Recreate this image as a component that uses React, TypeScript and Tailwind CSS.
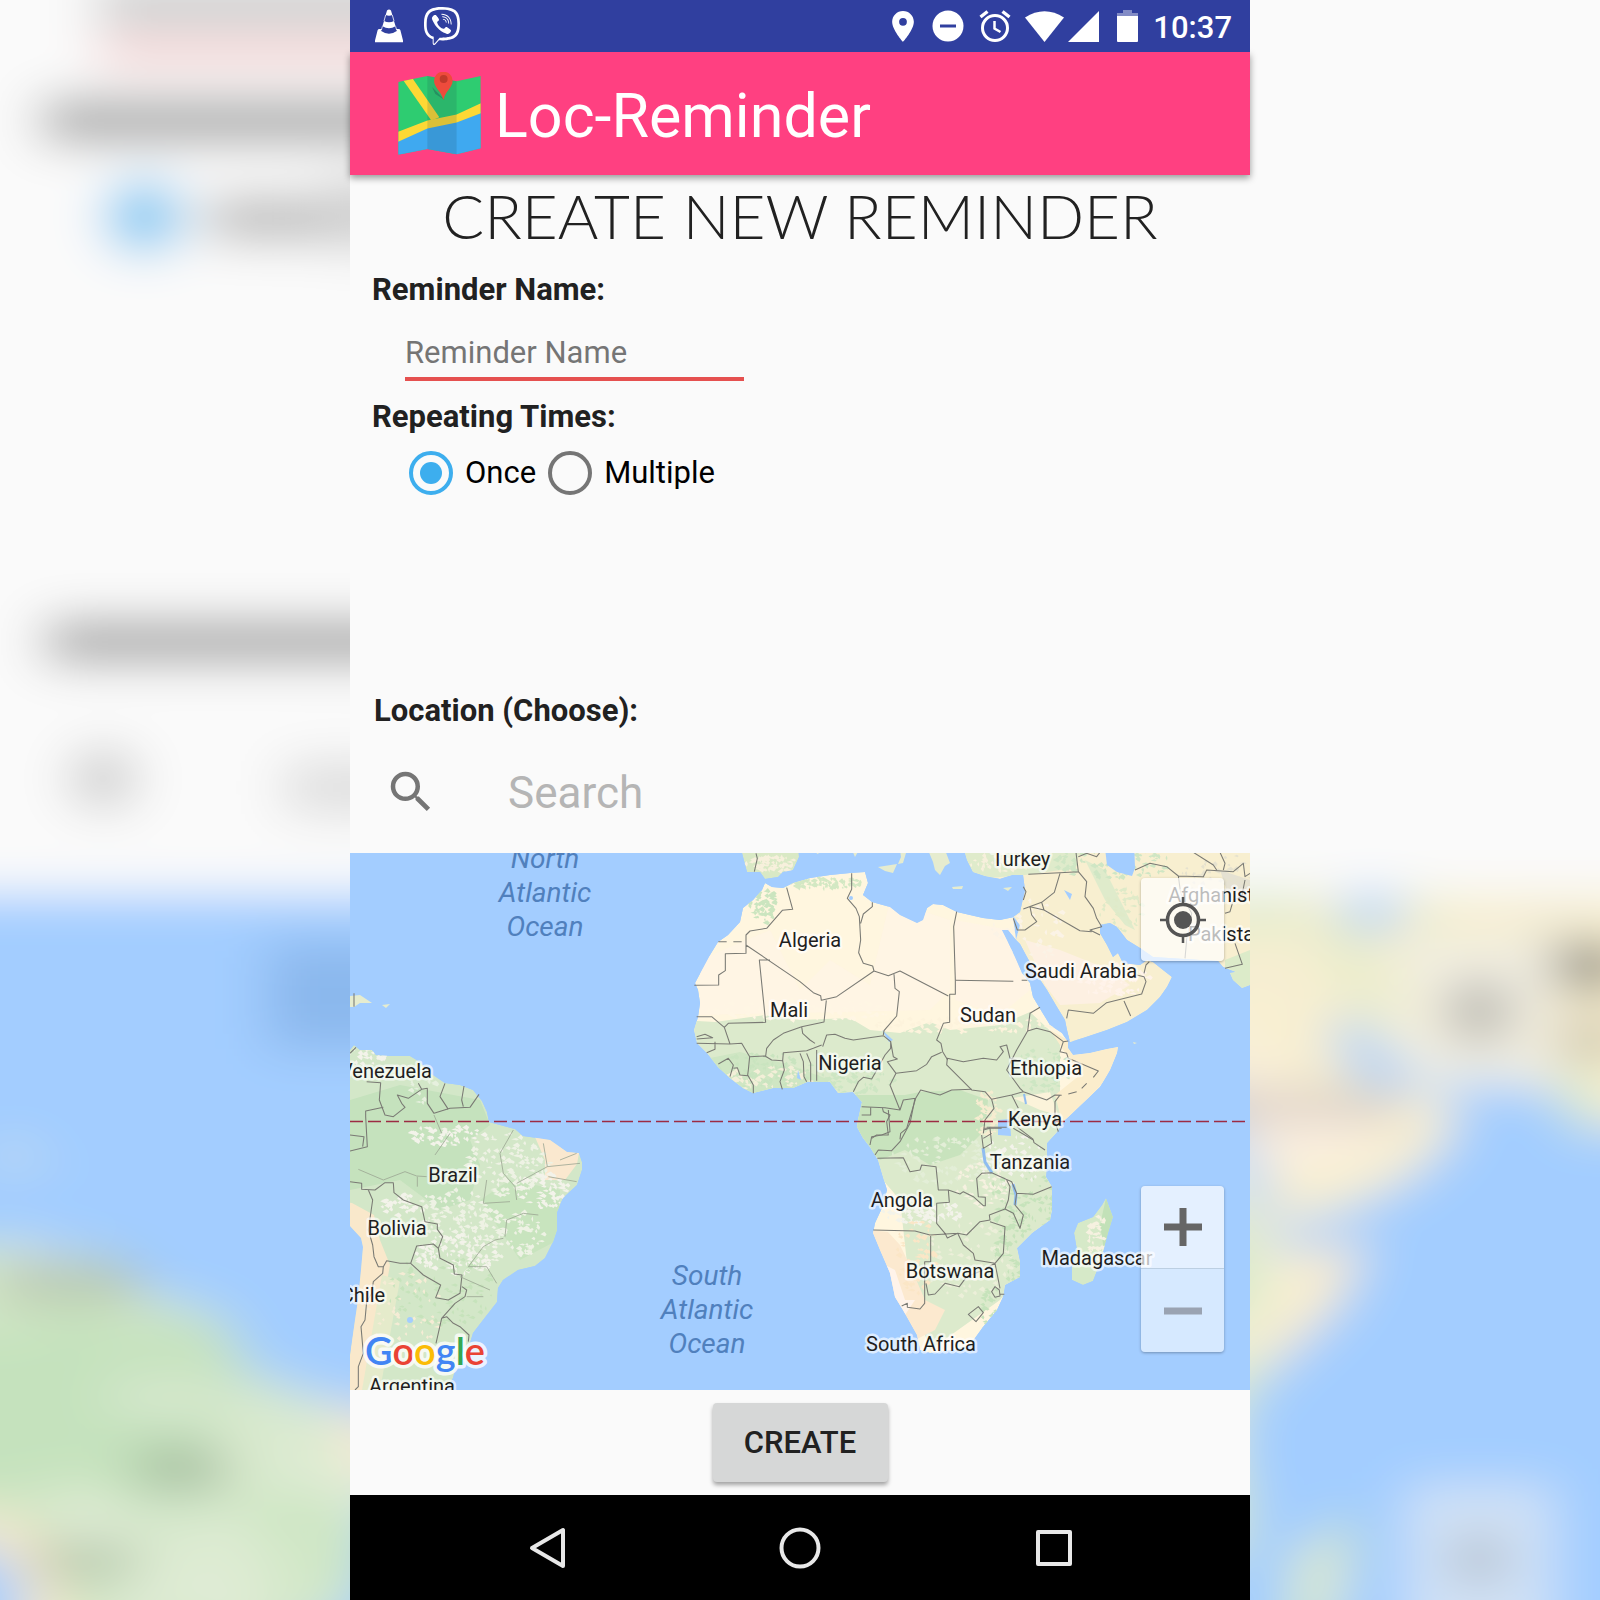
import { useState } from "react";
import type { ReactNode } from "react";
import { FaViber } from "react-icons/fa";
import { MdSearch } from "react-icons/md";

/* ---------- map data ---------- */

const AMERICA =
  "M290 1050L350 1050 354 1045 360 1050 372 1050 376 1055 390 1056 410 1056 420 1062 430 1073 445 1083 460 1085 473 1090 482 1101 487 1112 489 1122 500 1125 515 1129 523 1136 537 1138 550 1140 560 1147 567 1152 579 1153 582 1162 582 1170 577 1185 563 1198 557 1212 557 1230 553 1242 545 1258 535 1266 518 1270 503 1280 498 1288 497 1302 483 1320 473 1333 470 1343 458 1358 453 1378 440 1400 290 1400 290 1390 350 1390 350 1355 355 1320 358 1300 361 1270 363 1247 361 1238 350 1226 290 1200Z";

const AFRICA =
  "M765 883L762 890 753 900 743 908 740 922 728 935 718 942 710 955 703 968 695 983 698 990 700 1003 698 1017 694 1030 697 1043 707 1053 718 1067 730 1078 743 1088 753 1093 773 1088 793 1088 807 1082 830 1082 838 1093 853 1092 862 1102 858 1120 857 1127 863 1138 870 1147 878 1160 883 1177 887 1190 882 1208 875 1223 873 1233 880 1250 890 1273 895 1297 903 1310 917 1335 920 1350 930 1353 953 1350 970 1345 983 1327 997 1310 1003 1297 1005 1285 1020 1277 1020 1262 1017 1248 1032 1233 1050 1220 1052 1210 1052 1187 1046 1177 1047 1160 1047 1143 1057 1132 1063 1122 1083 1103 1100 1087 1110 1070 1117 1053 1118 1047 1107 1049 1090 1053 1073 1055 1068 1048 1068 1042 1062 1033 1050 1025 1042 1012 1033 997 1030 983 1022 973 1015 957 1007 940 1002 930 1008 930 1016 940 1020 925 1014 917 1000 920 983 918 970 915 957 912 943 905 933 904 927 908 923 920 917 923 900 915 890 907 872 902 863 895 868 883 865 872 850 873 830 875 810 878 793 883 783 888 772 887Z";

const ASIA =
  "M1013 917L1020 912 1022 903 1025 890 1023 875 1012 875 1000 879 985 876 973 872 967 860 965 853 965 800 1320 800 1320 980 1250 985 1242 988 1233 980 1230 973 1236 972 1223 967 1218 961 1200 960 1153 957 1140 948 1127 940 1117 927 1110 923 1100 925 1100 933 1107 945 1113 957 1118 953 1123 963 1140 965 1147 960 1153 962 1163 970 1172 977 1167 987 1160 997 1147 1010 1127 1022 1107 1030 1083 1038 1070 1042 1067 1030 1065 1020 1057 1007 1047 990 1037 975 1027 957 1020 944 1016 940Z";

const MADAGASCAR =
  "M1106 1198L1113 1217 1108 1233 1100 1263 1093 1281 1083 1285 1072 1280 1072 1267 1077 1250 1074 1233 1078 1223 1093 1217 1102 1205Z";

const IBERIA = "M742 830L742 853 747 872 760 872 765 879 778 877 783 872 793 870 799 857 797 830Z";

const ISLANDS = [
  "M878 867L897 864 893 873 885 871Z",
  "M900 850L906 853 903 863 898 864 901 857Z",
  "M928 850L945 850 950 863 945 866 940 875 935 870 933 862Z",
  "M952 887L963 886 962 889 953 889Z",
  "M1003 888L1012 887 1008 891Z",
  "M852 850L859 850 855 857Z",
  "M816 851L822 852 817 854Z",
  "M350 996L360 995 372 1003 360 1003 354 1007 350 1007Z",
  "M382 1005L390 1004 386 1008Z",
  "M1133 1042L1137 1043 1134 1044Z",
];

/* Borders are digitised at three times the map's scale, one tile per origin. */
const BORDER_TILES = [
  {
    origin: "translate(650 840) scale(0.33333)",
    lines:
      "M410 143L428 208 397 211 350 265 300 273 288 285 288 340 226 341 226 392 206 405 206 435 133 436M205 305H230M250 305H275M288 315L450 425 490 458 512 467 514 481 560 470 672 393 668 378 640 370 626 338 632 300 628 230 618 205 592 175 605 148 605 100M632 250L640 222 667 200 667 187M360 360L328 360 347 547 235 550 223 562 185 530 140 530M529 481L522 546 455 560 400 580 370 600 350 625 347 648M672 393L715 407 750 393 895 468M732 403L735 445 748 455 740 528 702 572 700 585M920 215L911 260 916 421 916 463 899 463 899 547 880 550 860 600 873 610 878 635 893 660M518 620L530 585 555 583 585 595 610 600 700 587 722 605 722 625 705 645 675 700 665 717 640 712 625 725 610 755M722 605L730 650 742 657 712 665 738 700 720 735 750 810 705 803 635 800M738 700L800 692 830 673 845 650 875 637M750 810L760 780 797 775 770 865 752 880 750 898M797 775L812 750 870 765 905 750 965 748M635 825H662V803M697 803L700 815 720 825 710 845 715 885 680 885 665 895M223 562L240 612 140 610M195 605L195 628 170 638M140 590L165 583 188 593 140 597M240 612L275 610 299 650 295 690 293 705 310 735 310 760M205 672L235 655 250 675 240 710M250 685L262 683 270 705 293 707M299 650L345 648 365 660 398 662M398 662L400 638 470 632 490 625 515 615M398 662L403 690 390 725 397 748M450 640L460 665 462 710 470 725M470 640L482 670 482 725M500 630V722M455 560L458 580 480 600 495 610M318 40L322 55 313 95",
  },
  {
    origin: "translate(940 840) scale(0.33333)",
    lines:
      "M265 103L360 98 415 95 440 125 435 170 460 205 470 235 485 260 450 270 480 285M360 100L343 157 305 187 250 207M305 187L312 210 420 272 455 275M312 210L270 200 275 225 290 245 255 270 232 270 220 235M250 180L258 155 250 140M415 95L408 37M415 50L440 40 470 50 480 37M585 90L630 70 680 80 715 108 722 160 755 220 740 300 735 355M715 108L790 110 800 90 880 95 910 70 915 110 930 100M760 37L820 75 830 90M840 37L855 70 850 90M855 220L870 215 880 180 905 170 915 120M885 310L907 373 855 385M380 535L385 510 460 520 500 488 605 462 618 425 612 410 590 405M552 483L572 528M612 400L618 375 628 365M47 421L220 424M245 421H262M300 502L270 520 263 573 230 630 200 690 240 745 250 755M263 573L290 565 330 575 370 605 385 603M370 605L360 635 380 640 385 655 475 693 460 712M440 730L425 745M410 755L385 762M365 766L345 765 320 780 250 755 215 765 155 778 135 755 95 750 20 675 22 655 70 665 130 655 170 660 190 635 180 620 200 615 210 655 230 660M155 778L162 805 135 840 130 880M215 765L235 805M360 765L345 785 345 845 355 875M230 860L280 898M130 865H185",
  },
  {
    origin: "translate(820 1090) scale(0.33333)",
    lines:
      "M285 25L270 100 240 155 215 182 175 180 165 195M172 205L250 203 270 245 300 240 305 225 348 230 355 300 385 300 420 312 430 305 460 320 490 347 496 347 496 322 475 320 470 265 485 250 515 248 575 275 590 310 640 313 695 290M385 300L388 337 350 340 350 400 375 430 382 444 413 430 440 435 480 395 510 390 508 375 555 357M560 270L570 290 565 330 555 357 580 370 600 415 610 375 585 345 590 310M160 420L285 423 330 435 413 430 430 465 460 490 465 510 525 520 550 490 555 410 510 395M332 438V515H314V640L300 657 262 652 262 640 245 648M318 580L325 615 345 612 375 580 418 590 440 560 490 540 525 520 540 595M515 605L525 590 538 600 540 618 525 622ZM540 613H553M445 673L475 650 490 668 468 695ZM485 135L490 175 515 160 510 115 490 120M490 145L515 130M500 112H560M580 115L640 150 642 158 675 180M205 60L210 125 185 135 155 140 150 165",
  },
  {
    origin: "translate(350 1000) scale(0.33333)",
    lines:
      "M50 245L92 248 88 300 105 345 130 350 165 322 155 310 142 285 175 295 215 268 232 265 232 310 252 340 300 325 360 322 387 283M205 250L215 268M285 250L270 290 295 328M342 258L335 300 340 320M100 322L47 333 47 350 52 440 0 453M0 405L42 410 38 440M0 545L35 550 35 568 75 570 105 548 130 548 132 578 160 600 215 620 225 665 262 672 262 688 278 710 265 745 270 775 310 795 313 822 336 825 330 880 295 900 257 893 272 855 220 825 182 790 200 738 250 732 265 745M55 570L68 600 55 690 68 735 72 770 85 800 100 800 110 782 150 790 182 790M100 800L98 820 70 845 65 880 50 905 45 960 33 980 40 1060 25 1100 25 1160 15 1170M336 860L350 870 345 890 315 910 275 955 290 950 310 970 330 980 357 1005 355 1025M275 955L258 1030M12 -20V20M0 160L18 142",
  },
];

const STATE_LINES =
  "M25 508L100 540 165 515 200 528 230 530M202 530V560M255 465L300 400M252 345L275 400M490 390L450 460 460 520 495 560 500 600M400 610L480 605M465 710L470 660 520 640 565 645M355 800L400 740 435 720 460 715M355 800L410 800 440 850M330 830L420 870M350 890H400M580 430L592 500 500 550M592 500L690 490M595 530L680 545M630 480L680 460M410 540L400 610";

type Patch = [number, number, number, number, number, string];

/* centre x, centre y, radius x, radius y, count, colour */
const PATCHES: Patch[] = [
  [445, 1135, 40, 10, 70, "#f3f3ea"],
  [505, 1165, 42, 32, 130, "#eef2e4"],
  [450, 1215, 38, 26, 110, "#eef2e4"],
  [500, 1235, 45, 26, 110, "#eef2e4"],
  [455, 1255, 42, 20, 110, "#f3f3ea"],
  [540, 1190, 26, 18, 60, "#f3f3ea"],
  [395, 1205, 18, 12, 40, "#f3f3ea"],
  [420, 1080, 14, 24, 30, "#e6f0de"],
  [440, 1290, 55, 35, 90, "#c6e3bb"],
  [400, 1310, 40, 40, 50, "#f5ecd5"],
  [365, 1055, 20, 10, 30, "#f3f3ea"],
  [760, 905, 16, 18, 60, "#cbe5bf"],
  [820, 883, 40, 6, 70, "#d3e8c3"],
  [770, 864, 26, 8, 60, "#f7f0dc"],
  [1000, 862, 36, 9, 70, "#f7f0dc"],
  [1110, 862, 60, 18, 110, "#cfe6c4"],
  [1120, 910, 22, 24, 50, "#dfeac8"],
  [1030, 930, 40, 30, 50, "#fbf3e6"],
  [1220, 880, 40, 26, 70, "#e6e2cf"],
  [1110, 980, 36, 16, 70, "#fff3ea"],
  [800, 1010, 100, 10, 80, "#fff6e4"],
  [960, 1025, 90, 8, 80, "#fdf3dc"],
  [760, 1070, 50, 18, 100, "#c9e4bf"],
  [765, 1078, 50, 12, 60, "#f3efd8"],
  [850, 1080, 40, 14, 80, "#cde6c3"],
  [940, 1160, 50, 24, 80, "#e3eed7"],
  [920, 1212, 40, 12, 80, "#f3f3ea"],
  [980, 1185, 26, 22, 60, "#f6f1e0"],
  [1020, 1200, 34, 34, 80, "#c6e3bb"],
  [1010, 1160, 34, 26, 60, "#f3f3ea"],
  [985, 1115, 12, 24, 60, "#f6ecd0"],
  [1040, 1070, 28, 22, 70, "#cde6c3"],
  [960, 1260, 50, 40, 70, "#ecefd9"],
  [1010, 1250, 18, 30, 50, "#c6e3bb"],
  [1095, 1235, 10, 30, 50, "#f6f1e0"],
  [990, 1310, 12, 24, 40, "#c6e3bb"],
  [915, 1255, 20, 40, 60, "#fbe6c6"],
];

function buildSpeckles(patches: Patch[]) {
  let seed = 20117;
  const rnd = () => {
    seed = (seed * 1103515245 + 12345) % 2147483648;
    return seed / 2147483648;
  };
  return patches.map(([cx, cy, rx, ry, count, fill]) => {
    let d = "";
    for (let i = 0; i < count; i++) {
      const a = rnd() * Math.PI * 2;
      const r = Math.sqrt(rnd());
      const x = cx + Math.cos(a) * r * rx;
      const y = cy + Math.sin(a) * r * ry;
      const w = 1 + rnd() * 4;
      const h = 1 + rnd() * 2;
      d += `M${x.toFixed(1)} ${y.toFixed(1)}l${w.toFixed(1)} ${(-h).toFixed(1)} ${(w * 0.6).toFixed(1)} ${h.toFixed(1)} ${(-w * 0.4).toFixed(1)} ${h.toFixed(1)}z`;
    }
    return { d, fill };
  });
}

const SPECKLES = buildSpeckles(PATCHES);

const COUNTRIES: [string, number, number][] = [
  ["Turkey", 1021, 866],
  ["Afghanist", 1211, 902],
  ["Pakista", 1221, 941],
  ["Algeria", 810, 947],
  ["Saudi Arabia", 1081, 978],
  ["Mali", 789, 1017],
  ["Sudan", 988, 1022],
  ["Nigeria", 850, 1070],
  ["Ethiopia", 1046, 1075],
  ["Venezuela", 386, 1078],
  ["Kenya", 1035, 1126],
  ["Tanzania", 1030, 1169],
  ["Brazil", 453, 1182],
  ["Angola", 902, 1207],
  ["Bolivia", 397, 1235],
  ["Madagascar", 1097, 1265],
  ["Botswana", 950, 1278],
  ["Chile", 363, 1302],
  ["South Africa", 921, 1351],
  ["Argentina", 412, 1393],
];

const OCEANS: [string, number, number][] = [
  ["North", 545, 868],
  ["Atlantic", 545, 902],
  ["Ocean", 545, 936],
  ["South", 707, 1285],
  ["Atlantic", 707, 1319],
  ["Ocean", 707, 1353],
];

function MapTerrain({ id }: { id: string }) {
  return (
    <g>
      <clipPath id={id}>
        <path d={[AMERICA, AFRICA, ASIA, MADAGASCAR, IBERIA].join("")} />
      </clipPath>
      <rect x="200" y="853" width="1200" height="537" fill="#a3cdff" />
      <path d={ISLANDS.join("")} fill="#e6eccf" />
      <g clipPath={`url(#${id})`}>
        <path d={AMERICA} fill="#d3e7c8" />
        <path d="M290 1090L350 1100 400 1085 480 1100 490 1125 470 1140 480 1165 470 1200 440 1210 400 1180 350 1190 290 1190Z" fill="#c5e2bd" />
        <path d="M480 1200L510 1180 560 1190 558 1240 520 1260 500 1230Z" fill="#c8e4be" />
        <path d="M535 1137L550 1139 567 1151 579 1153 577 1164 565 1180 545 1180 545 1160Z" fill="#fae8cf" />
        <path d="M290 1195L352 1203 374 1215 380 1240 390 1265 382 1310 385 1340 370 1390 350 1390 350 1355 361 1260Z" fill="#f9e8cb" />
        <path d="M382 1275L400 1280 380 1390 362 1390Z" fill="#e5ebcb" />
        <path d={AFRICA} fill="#fff6df" />
        <path d="M700 960L770 930 800 990 830 960 870 985 890 900 950 920 950 990 930 1010 700 1015Z" fill="#fff3ea" opacity="0.5" />
        <path d="M955 920L1010 930 1030 990 1000 1015 955 1000Z" fill="#fff3ea" opacity="0.4" />
        <path d="M680 1020L715 1022 765 1015 800 1020 850 1018 870 1030 900 1033 930 1022 950 1030 1000 1025 1030 1012 1060 1040 1060 1100 1080 1200 1000 1300 930 1350 910 1290 900 1200 840 1130 680 1090Z" fill="#dceacc" />
        <path d="M700 1060L740 1052 790 1065 830 1080 780 1100 700 1100Z" fill="#cfe6c3" />
        <path d="M850 1095L905 1095 920 1092 960 1090 988 1100 985 1130 960 1155 930 1165 905 1150 880 1160 850 1130Z" fill="#c8e3bd" />
        <path d="M1050 1030L1068 1040 1120 1045 1110 1075 1080 1108 1062 1122 1055 1095 1080 1075Z" fill="#fbedcc" />
        <path d="M1013 1098L1050 1092 1058 1115 1040 1110Z" fill="#fbf3da" />
        <path d="M870 1230L888 1232 900 1245 912 1270 925 1300 945 1310 935 1330 915 1340 890 1300Z" fill="#fce9cf" />
        <path d="M885 1265L895 1270 905 1300 915 1300 905 1315 890 1290Z" fill="#fff3ea" />
        <path d={ASIA} fill="#f8efd0" />
        <path d="M965 850L1080 850 1075 868 1025 875 965 880Z" fill="#dfebcb" />
        <path d="M1085 860L1105 870 1135 930 1125 925 1105 900Z" fill="#dfebcb" />
        <path d="M1025 940L1060 950 1110 970 1130 985 1100 1003 1060 1005 1045 985Z" fill="#fdf0e2" />
        <path d="M1220 870L1250 880 1250 900 1230 900Z" fill="#e5e1d2" />
        <path d="M1225 960L1250 950 1250 990 1225 985Z" fill="#dcebc9" />
        <path d={MADAGASCAR} fill="#d6e9c8" />
        <path d="M1106 1198L1113 1217 1104 1250 1100 1225Z" fill="#c2e1b8" />
        <path d={IBERIA} fill="#d9e9c5" />
        {SPECKLES.map((s, i) => (
          <path key={i} d={s.d} fill={s.fill} />
        ))}
      </g>
      <g fill="#a3cdff">
        <path d="M1104 840L1107 865 1117 872 1132 876 1135 868 1134 840Z" />
        <path d="M998 1120L1010 1119 1011 1136 998 1135Z" />
        <path d="M882 1030L893 1040 889 1042Z" />
        <path d="M1064 890L1072 894 1070 900Z" />
        <path d="M798 1070L801 1080 797 1078Z" />
        <circle cx="410" cy="1320" r="3" />
        <circle cx="851" cy="898" r="2" />
      </g>
      <g fill="none" stroke="#8fbcf0" strokeWidth="3" strokeLinejoin="round">
        <path d="M983 1148L985 1162 992 1173" />
        <path d="M1013 1184L1016 1195 1015 1205" />
        <path d="M1024 1094L1026 1104" strokeWidth="2" />
      </g>
    </g>
  );
}

function WorldMap() {
  return (
    <svg viewBox="350 853 900 537" preserveAspectRatio="xMidYMid slice" className="block h-full w-full" role="img" aria-label="Map">
      <MapTerrain id="land" />
      {BORDER_TILES.map((tile) => (
        <g key={tile.origin} transform={tile.origin}>
          <path d={tile.lines} fill="none" stroke="#7a7a74" strokeWidth="3.2" strokeLinejoin="round" />
        </g>
      ))}
      <g transform="translate(350 1000) scale(0.33333)">
        <path d={STATE_LINES} fill="none" stroke="#9aa592" strokeWidth="2.4" />
      </g>
      <path d="M350 1121.500H1250" stroke="#9c2b43" strokeWidth="1.600" strokeDasharray="13 5" />
      <g
        fontFamily="Roboto, sans-serif"
        fontSize="20"
        textAnchor="middle"
        fill="#1f1f1f"
        stroke="#ffffff"
        strokeOpacity="0.65"
        strokeWidth="5"
        strokeLinejoin="round"
        paintOrder="stroke"
      >
        {COUNTRIES.map(([name, x, y]) => (
          <text key={name} x={x} y={y}>
            {name}
          </text>
        ))}
      </g>
      <g fontFamily="Roboto, sans-serif" fontSize="28" fontStyle="italic" textAnchor="middle" fill="#5080bd">
        {OCEANS.map(([name, x, y]) => (
          <text key={`${name}${y}`} x={x} y={y}>
            {name}
          </text>
        ))}
      </g>
      <text
        x="425"
        y="1365"
        textAnchor="middle"
        fontFamily="Lato, sans-serif"
        fontSize="38"
        fontWeight="600"
        stroke="#ffffff"
        strokeOpacity="0.8"
        strokeWidth="7"
        strokeLinejoin="round"
        paintOrder="stroke"
      >
        <tspan fill="#4285f4">G</tspan>
        <tspan fill="#ea4335">o</tspan>
        <tspan fill="#fbbc05">o</tspan>
        <tspan fill="#4285f4">g</tspan>
        <tspan fill="#34a853">l</tspan>
        <tspan fill="#ea4335">e</tspan>
      </text>
    </svg>
  );
}

/* Enlarged, out-of-focus copy of the screen that fills the window behind it. */
function Backdrop() {
  return (
    <svg
      viewBox="350 350 900 900"
      preserveAspectRatio="xMidYMid slice"
      className="absolute inset-0 h-full w-full"
      aria-hidden="true"
    >
      <filter id="soften" filterUnits="userSpaceOnUse" x="250" y="250" width="1100" height="1100">
        <feGaussianBlur stdDeviation="15 13" />
      </filter>
      <g filter="url(#soften)">
        <rect x="200" y="200" width="1200" height="1200" fill="#fafafa" />
        <MapTerrain id="soft-land" />
        <rect x="200" y="700" width="1200" height="153" fill="#fafafa" />
        <rect x="405" y="341" width="220" height="22" fill="#757575" opacity="0.4" />
        <rect x="405" y="376" width="339" height="6" fill="#e5504f" />
        <rect x="374" y="406" width="236" height="24" fill="#212121" opacity="0.4" />
        <circle cx="431" cy="472" r="21" fill="#3daeee" opacity="0.65" />
        <rect x="467" y="461" width="69" height="24" fill="#212121" opacity="0.3" />
        <rect x="536" y="450" width="60" height="40" fill="#757575" opacity="0.3" />
        <rect x="376" y="699" width="258" height="24" fill="#212121" opacity="0.4" />
        <circle cx="408" cy="788" r="18" fill="#757575" opacity="0.35" />
        <rect x="510" y="778" width="130" height="30" fill="#9e9e9e" opacity="0.3" />
        <rect x="500" y="880" width="92" height="60" fill="#5080bd" opacity="0.28" />
        <rect x="350" y="1061" width="80" height="20" fill="#1f1f1f" opacity="0.18" />
        <rect x="428" y="1166" width="48" height="20" fill="#1f1f1f" opacity="0.2" />
        <rect x="368" y="1218" width="58" height="20" fill="#1f1f1f" opacity="0.15" />
        <rect x="1026" y="962" width="110" height="20" fill="#1f1f1f" opacity="0.15" />
        <rect x="1225" y="882" width="40" height="24" fill="#1f1f1f" opacity="0.5" />
        <rect x="1225" y="926" width="40" height="18" fill="#1f1f1f" opacity="0.25" />
        <rect x="1141" y="878" width="83" height="83" fill="#eeeeee" opacity="0.6" />
        <circle cx="1182" cy="919" r="19" fill="#666666" opacity="0.4" />
        <rect x="1141" y="1185" width="83" height="165" fill="#f0f0f0" opacity="0.6" />
        <circle cx="1182" cy="1227" r="15" fill="#666666" opacity="0.3" />
      </g>
    </svg>
  );
}

/* ---------- icons ---------- */

function ConeIcon() {
  return (
    <svg viewBox="0 0 28 34" className="h-[34px] w-7" fill="#fff" aria-hidden="true">
      <path d="M12 1.500Q14 -.5 16 1.500L17.300 6Q14 7.500 10.700 6ZM9 12L7.400 17.300Q14 21 20.600 17.300L19 12Q14 14.500 9 12Z" />
      <path d="M4.500 20H6.600L6.200 22Q14 27.500 21.800 22L21.400 20H23.500Q25 20 25.400 21.300L28 31.500V33.300H0V31.500L2.600 21.300Q3 20 4.500 20Z" />
      <path d="M10.700 6L9 12M17.300 6L19 12M7.400 17.300L6.400 21M20.600 17.300L21.600 21" stroke="#fff" strokeWidth=".8" />
    </svg>
  );
}

function StatusIcons() {
  return (
    <div className="flex items-center">
      <svg viewBox="5 2 14 20" className="mr-[18px] h-[31px] w-[22px]" fill="#fff" aria-hidden="true">
        <path d="M12 2C8.130 2 5 5.130 5 9c0 5.250 7 13 7 13s7-7.750 7-13c0-3.870-3.130-7-7-7zm0 9.500a2.500 2.500 0 110-5 2.500 2.500 0 010 5z" />
      </svg>
      <svg viewBox="0 0 32 32" className="mr-[15px] size-8" aria-hidden="true">
        <circle cx="16" cy="16" r="15.500" fill="#fff" />
        <path d="M8 16H24" stroke="#303f9f" strokeWidth="3" />
      </svg>
      <svg viewBox="0 0 32 32" className="mr-3.5 size-8" fill="none" stroke="#fff" aria-hidden="true">
        <circle cx="16" cy="18" r="12.500" strokeWidth="3" />
        <path d="M15.500 11V18.500L21.500 22" strokeWidth="2.500" />
        <path d="M1.500 7L8.500 1.500M30.500 7L23.500 1.500" strokeWidth="3.400" />
      </svg>
      <svg viewBox="0 0 39 31" className="mr-1 h-[31px] w-[39px]" fill="#fff" aria-hidden="true">
        <path d="M0 6.500Q19.500 -6 39 6.500L19.500 31Z" />
      </svg>
      <svg viewBox="0 0 31 31" className="mr-[18px] size-[31px]" fill="#fff" aria-hidden="true">
        <path d="M31 0V31H0Z" />
      </svg>
      <svg viewBox="0 0 21 32" className="mr-[15px] h-8 w-[21px]" fill="#fff" aria-hidden="true">
        <path d="M6 0H15V3H21V6H0V3H6Z" opacity=".4" />
        <path d="M0 6H21V31Q21 32 20 32H1Q0 32 0 31Z" />
      </svg>
    </div>
  );
}

function AppLogo() {
  return (
    <svg viewBox="0 0 249 250" className="h-[83px] w-[83px]" aria-hidden="true">
      <clipPath id="sheet">
        <path d="M0 30L88 12 176 28 249 12V230L176 248 88 232 0 249Z" />
      </clipPath>
      <g clipPath="url(#sheet)">
        <rect width="249" height="250" fill="#2ecc71" />
        <path d="M0 205L88 168 176 150 249 118V250H0Z" fill="#3fa9f0" />
        <path d="M0 180L88 146 176 128 249 94V124L176 152 88 170 0 210Z" fill="#fdd835" />
        <path d="M12 20H44L124 136 100 146Z" fill="#fdd835" />
        <rect x="88" width="88" height="250" fill="#1c3d4d" opacity=".15" />
        <path d="M102 45L140 84 112 66Z" fill="#1c3d4d" opacity=".3" />
      </g>
      <path d="M136 84C130 58 108 46 108 26a28 27 0 0156 0C164 46 142 58 136 84Z" fill="#ee4b3c" />
      <circle cx="137" cy="21" r="12" fill="#c0392b" />
    </svg>
  );
}

/* ---------- screen ---------- */

function FieldLabel({ children, htmlFor }: { children: ReactNode; htmlFor: string }) {
  return (
    <label htmlFor={htmlFor} className="block text-[31px] leading-10 font-bold text-[#212121]">
      {children}
    </label>
  );
}

function RepeatOption({ label, checked, onSelect }: { label: string; checked: boolean; onSelect: () => void }) {
  return (
    <label className="flex items-center gap-3 text-[31px] leading-11 text-black">
      <input
        type="radio"
        name="repeat"
        checked={checked}
        onChange={onSelect}
        className="grid size-11 appearance-none place-items-center rounded-full border-4 border-[#757575] before:size-[22px] before:rounded-full before:bg-transparent checked:border-[#3daeee] checked:before:bg-[#3daeee]"
      />
      {label}
    </label>
  );
}

export default function App() {
  const [repeat, setRepeat] = useState("Once");

  return (
    <div className="relative min-h-screen overflow-hidden bg-[#fafafa] font-['Roboto',sans-serif]">
      <Backdrop />
      <div className="relative mx-auto flex min-h-screen w-full max-w-[900px] flex-col bg-[#fafafa]">
        <div className="relative z-20 flex h-[52px] items-center bg-[#303f9f] pr-[18px] pl-[25px] text-white">
          <ConeIcon />
          <FaViber className="ml-5 size-[38px]" aria-hidden="true" />
          <div className="ml-auto flex items-center">
            <StatusIcons />
            <span className="pt-0.5 text-[31px] leading-none font-medium">10:37</span>
          </div>
        </div>

        <header className="relative z-10 flex h-[123px] items-center gap-3.5 bg-[#ff4081] pl-12 text-white shadow-[0_3px_7px_rgba(0,0,0,0.4)]">
          <AppLogo />
          <span className="pt-1.5 text-[61px] leading-none">Loc-Reminder</span>
        </header>

        <form className="flex flex-1 flex-col" onSubmit={(e) => e.preventDefault()}>
          <h1 className="h-[95px] text-center font-['Lato',sans-serif] text-[62px] leading-[80px] font-light text-[#212121]">
            CREATE NEW REMINDER
          </h1>
          <div className="px-[22px]">
            <FieldLabel htmlFor="reminder-name">Reminder Name:</FieldLabel>
            <input
              id="reminder-name"
              type="text"
              placeholder="Reminder Name"
              className="mt-4 mb-4 ml-[33px] block h-[55px] w-[339px] border-b-4 border-[#e5504f] bg-transparent pt-0.5 text-[31px] outline-none placeholder:text-[#757575]"
            />
            <fieldset>
              <legend className="block text-[31px] leading-10 font-bold text-[#212121]">Repeating Times:</legend>
              <div className="mt-3.5 ml-[37px] flex gap-3">
                {["Once", "Multiple"].map((option) => (
                  <RepeatOption
                    key={option}
                    label={option}
                    checked={repeat === option}
                    onSelect={() => setRepeat(option)}
                  />
                ))}
              </div>
            </fieldset>
          </div>

          <div className="mt-auto px-6">
            <FieldLabel htmlFor="location-search">Location (Choose):</FieldLabel>
            <div className="flex h-[122px] items-center gap-[70px] pl-2.5">
              <MdSearch className="size-[54px] shrink-0 text-[#757575]" aria-hidden="true" />
              <input
                id="location-search"
                type="search"
                placeholder="Search"
                className="min-w-0 flex-1 bg-transparent pt-0.5 text-[44px] leading-[52px] outline-none placeholder:text-[#b5b5b5]"
              />
            </div>
          </div>

          <div className="relative h-[537px] overflow-hidden">
            <WorldMap />
            <button
              type="button"
              aria-label="My location"
              className="absolute top-[25px] right-[26px] grid size-[83px] place-items-center rounded-sm bg-white/70 shadow-[0_1px_3px_rgba(0,0,0,0.3)]"
            >
              <svg viewBox="0 0 46 46" className="size-[46px]" fill="none" stroke="#555" aria-hidden="true">
                <circle cx="23" cy="23" r="15.500" strokeWidth="3.500" />
                <circle cx="23" cy="23" r="9" fill="#555" stroke="none" />
                <path d="M23 0V9M23 37V46M0 23H9M37 23H46" strokeWidth="2.500" />
              </svg>
            </button>
            <div className="absolute right-[26px] bottom-[38px] flex flex-col rounded-sm shadow-[0_1px_3px_rgba(0,0,0,0.3)]">
              <button
                type="button"
                aria-label="Zoom in"
                className="grid h-[83px] w-[83px] place-items-center rounded-t-sm border-b border-[#bccfe2] bg-white/70"
              >
                <svg viewBox="0 0 38 38" className="size-[38px]" stroke="#666" strokeWidth="7" aria-hidden="true">
                  <path d="M19 0V38M0 19H38" />
                </svg>
              </button>
              <button
                type="button"
                aria-label="Zoom out"
                className="grid h-[83px] w-[83px] place-items-center rounded-b-sm bg-white/55"
              >
                <svg viewBox="0 0 38 38" className="size-[38px]" stroke="#9aa3b2" strokeWidth="7" aria-hidden="true">
                  <path d="M0 19H38" />
                </svg>
              </button>
            </div>
          </div>

          <div className="flex h-[105px] items-start justify-center pt-[13px]">
            <button
              type="submit"
              className="h-[79px] w-[175px] rounded-sm bg-[#d6d7d7] pt-0.5 text-[31px] font-medium text-[#212121] shadow-[0_3px_4px_rgba(0,0,0,0.35)]"
            >
              CREATE
            </button>
          </div>
        </form>

        <nav className="flex h-[105px] items-center justify-center gap-[213px] bg-black">
          <button type="button" aria-label="Back">
            <svg viewBox="0 0 40 42" className="h-[42px] w-10" fill="none" stroke="#e8e8e8" strokeWidth="4" strokeLinejoin="round" aria-hidden="true">
              <path d="M37 3V39L6 21Z" />
            </svg>
          </button>
          <button type="button" aria-label="Home">
            <svg viewBox="0 0 42 42" className="size-[42px]" fill="none" stroke="#e8e8e8" strokeWidth="4" aria-hidden="true">
              <circle cx="21" cy="21" r="18.500" />
            </svg>
          </button>
          <button type="button" aria-label="Recent apps">
            <svg viewBox="0 0 40 42" className="h-[42px] w-10" fill="none" stroke="#e8e8e8" strokeWidth="4" strokeLinejoin="round" aria-hidden="true">
              <rect x="4" y="5" width="32" height="32" />
            </svg>
          </button>
        </nav>
      </div>
    </div>
  );
}
